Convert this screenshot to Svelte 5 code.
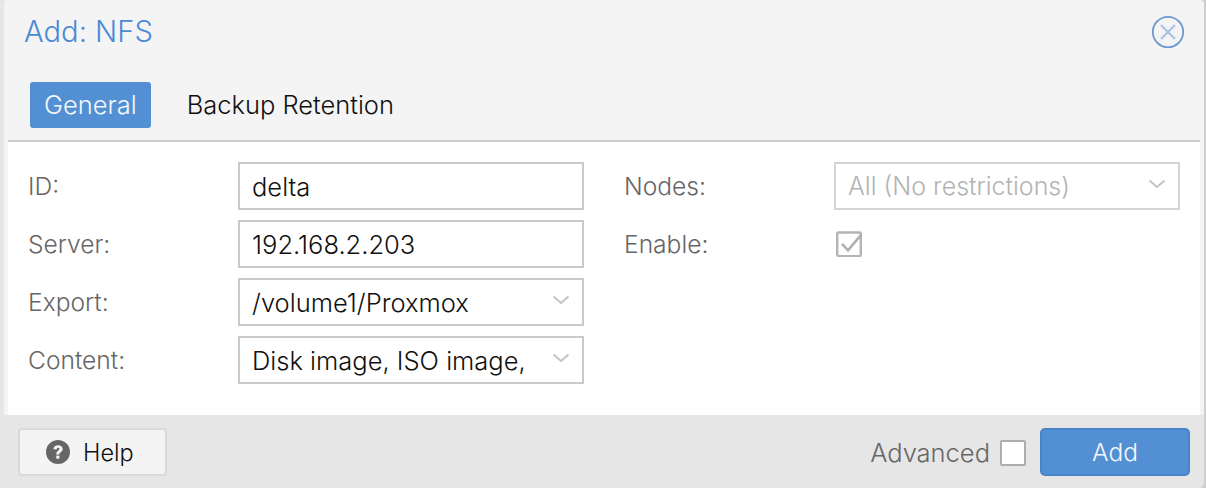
<script>
  const leftRows = [
    { label: 'ID:', value: 'delta' },
    { label: 'Server:', value: '192.168.2.203' },
    { label: 'Export:', value: '/volume1/Proxmox', arrow: true },
    { label: 'Content:', value: 'Disk image, ISO image,', arrow: true }
  ];
</script>

<div class="page">
  <div class="dialog">
    <header class="title">
      <h1>Add: NFS</h1>
      <svg class="close" viewBox="0 0 34 34" width="34" height="34" aria-label="Close">
        <circle cx="17" cy="17" r="15.2" fill="none" stroke="#6f9bd1" stroke-width="1.8" />
        <path d="M10 10 24 24M24 10 10 24" stroke="#a9c3e6" stroke-width="2.2" fill="none" />
      </svg>
    </header>
    <nav class="tabs">
      <span class="tab active">General</span>
      <span class="tab">Backup Retention</span>
    </nav>
    <main class="body">
      <section class="col">
        {#each leftRows as row}
          <div class="row">
            <span class="label">{row.label}</span>
            <div class="field">
              <span class="val">{row.value}</span>
              {#if row.arrow}
                <svg class="chev" viewBox="0 0 18 10" width="18" height="10"><path d="M1.5 1.5 9 8l7.5-6.5" fill="none" stroke="#c4c4c4" stroke-width="2" /></svg>
              {/if}
            </div>
          </div>
        {/each}
      </section>
      <section class="col right">
        <div class="row">
          <span class="label">Nodes:</span>
          <div class="field disabled">
            <span class="val">All (No restrictions)</span>
            <svg class="chev" viewBox="0 0 18 10" width="18" height="10"><path d="M1.5 1.5 9 8l7.5-6.5" fill="none" stroke="#c4c4c4" stroke-width="2" /></svg>
          </div>
        </div>
        <div class="row">
          <span class="label">Enable:</span>
          <span class="checkbox">
            <svg viewBox="0 0 30 26" width="30" height="26">
              <rect x="3.200" y="1.500" width="23.600" height="23.600" rx="1.500" fill="none" stroke="#b4b4b4" stroke-width="2.400" />
              <path d="M8 12.800 14 19.300 27.500 3.300" fill="none" stroke="#b0b0b0" stroke-width="2.600" />
            </svg>
          </span>
        </div>
      </section>
    </main>
    <footer class="foot">
      <button class="help">
        <svg viewBox="0 0 24 24" width="24" height="24">
          <circle cx="12" cy="12" r="12" fill="#666" />
          <path d="M7.400 9.200c.2-2.600 2.100-4 4.700-4 2.600 0 4.600 1.500 4.600 3.700 0 3.100-3.300 3-3.300 5.600h-3.100c0-3.800 3.100-3.800 3.100-5.400 0-.8-.6-1.300-1.300-1.300-.9 0-1.400.7-1.500 1.700z" fill="#f3f3f3" />
          <rect x="10.300" y="15.600" width="3.100" height="3.100" fill="#f3f3f3" />
        </svg>
        <span>Help</span>
      </button>
      <span class="spacer"></span>
      <span class="adv">Advanced</span>
      <span class="advbox"></span>
      <button class="add">Add</button>
    </footer>
  </div>
</div>

<style>
  :global(body) {
    margin: 0;
    background: #fff;
  }
  .page {
    width: 1206px;
    height: 488px;
    font-family: Inter, "Liberation Sans", Arial, sans-serif;
    font-weight: 300;
    overflow: hidden;
    background: linear-gradient(90deg, #e6e6e6, #cfcfcf);
    padding: 0 2px 0 4px;
    box-sizing: border-box;
  }
  .dialog {
    height: 488px;
    background: #f4f4f4;
    border-radius: 4px 4px 6px 6px;
    display: flex;
    flex-direction: column;
    box-sizing: border-box;
  }
  .title {
    height: 64px;
    display: flex;
    align-items: center;
    justify-content: space-between;
    padding: 0 19px 0 20px;
    flex: none;
  }
  h1 {
    margin: -2px 0 0;
    font-size: 29.200px;
    font-weight: 300;
    color: #4a8ad4;
  }
  .close {
    display: block;
  }
  .tabs {
    height: 76px;
    flex: none;
    display: flex;
    align-items: flex-start;
    padding: 18px 0 0 22px;
    box-sizing: border-box;
    margin: 0 4px;
  }
  .tab {
    height: 46px;
    line-height: 46px;
    padding: 0 14px;
    border-radius: 3px;
    font-size: 25.500px;
    color: #111;
    margin-right: 22px;
  }
  .active {
    background: #5390d3;
    color: #f4f7fc;
  }
  .body {
    flex: 1;
    margin: 0 4px;
    background: #fff;
    border-top: 2px solid #cdcdcd;
    display: flex;
    padding: 20px 0 0 20px;
  }
  .col {
    width: 556px;
    display: flex;
    flex-direction: column;
    gap: 10px;
  }
  .right {
    margin-left: 40px;
  }
  .row {
    display: flex;
    align-items: center;
    height: 48px;
  }
  .label {
    width: 210px;
    font-size: 24.600px;
    color: #666;
    flex: none;
  }
  .field {
    flex: 1;
    height: 48px;
    box-sizing: border-box;
    border: 2px solid #c9c9c9;
    display: flex;
    align-items: center;
    justify-content: space-between;
    padding: 0 13px 0 12px;
    font-size: 25.500px;
    color: #111;
  }
  .disabled {
    color: #b3b3b3;
    border-color: #d4d4d4;
    font-size: 25px;
  }
  .chev {
    margin-top: -4px;
    margin-right: -1px;
  }
  .checkbox {
    display: flex;
  }
  .foot {
    height: 73px;
    flex: none;
    background: #e6e6e6;
    display: flex;
    align-items: center;
    padding: 1px 14px 0 14px;
    border-radius: 0 0 6px 6px;
    box-sizing: border-box;
  }
  .help {
    width: 149px;
    height: 48px;
    background: #f4f4f4;
    border: 2px solid #d9d9d9;
    border-radius: 4px;
    display: flex;
    align-items: center;
    gap: 13px;
    padding: 0 0 0 26px;
    box-sizing: border-box;
    font: inherit;
    font-size: 23.500px;
    color: #111;
  }
  .spacer {
    flex: 1;
  }
  .adv {
    font-size: 25.500px;
    color: #666;
    margin-right: 10px;
  }
  .advbox {
    width: 26px;
    height: 26px;
    box-sizing: border-box;
    background: #fff;
    border: 2.500px solid #adadad;
    border-radius: 2px;
    margin: 2px 14px 0 0;
  }
  .add {
    width: 150px;
    height: 48px;
    background: #5390d3;
    border: 2px solid #4a84c8;
    border-radius: 5px;
    color: #f4f7fc;
    font: inherit;
    font-size: 24.500px;
  }
</style>
